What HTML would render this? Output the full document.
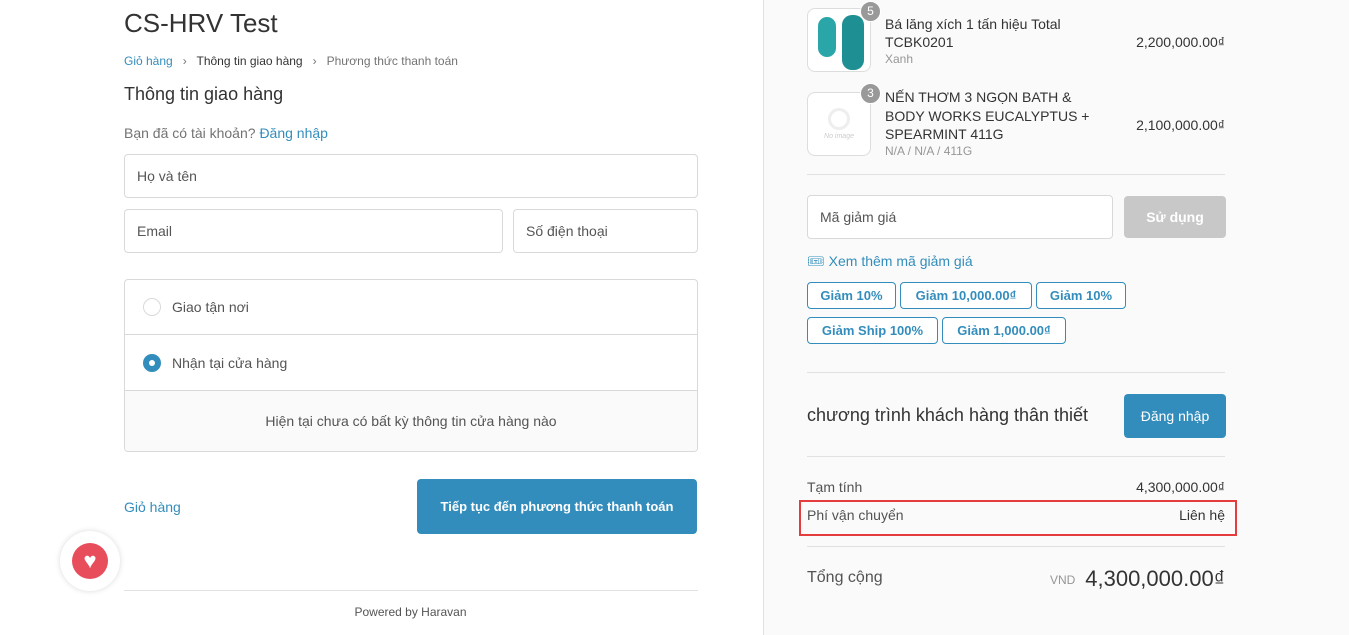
<!DOCTYPE html>
<html><head><meta charset="utf-8"><style>
*{box-sizing:border-box;margin:0;padding:0}
body{width:1349px;height:635px;overflow:hidden;font-family:"Liberation Sans",Arial,sans-serif;color:#333;background:#fff;position:relative}
.abs{position:absolute}
.right{position:absolute;left:763px;top:0;width:586px;height:635px;background:#fafafa;border-left:1px solid #e1e1e1}
.inp{position:absolute;border:1px solid #d9d9d9;border-radius:4px;background:#fff;font-size:14px;color:#555;padding-left:12px;display:flex;align-items:center}
.blue{color:#338dbc}
.tag{position:absolute;height:27px;border:1px solid #338dbc;border-radius:4px;color:#338dbc;font-weight:bold;font-size:13px;display:flex;align-items:center;justify-content:center;background:#fff}
.line{position:absolute;height:1px;background:#e1e1e1}
</style></head><body>
<div class="abs" style="left:124px;top:8px;font-size:26px;color:#333">CS-HRV Test</div>
<div class="abs" style="left:124px;top:54px;font-size:12px;color:#737373"><span class="blue">Giỏ hàng</span> &nbsp;&nbsp;›&nbsp;&nbsp; <span style="color:#333">Thông tin giao hàng</span> &nbsp;&nbsp;›&nbsp;&nbsp; Phương thức thanh toán</div>
<div class="abs" style="left:124px;top:84px;font-size:18px">Thông tin giao hàng</div>
<div class="abs" style="left:124px;top:125px;font-size:14px;color:#737373">Bạn đã có tài khoản? <span class="blue">Đăng nhập</span></div>
<div class="inp" style="left:124px;top:154px;width:574px;height:44px">Họ và tên</div>
<div class="inp" style="left:124px;top:209px;width:379px;height:44px">Email</div>
<div class="inp" style="left:513px;top:209px;width:185px;height:44px">Số điện thoại</div>
<div class="abs" style="left:124px;top:279px;width:574px;height:173px;border:1px solid #d9d9d9;border-radius:4px;overflow:hidden">
 <div style="height:55px;border-bottom:1px solid #d9d9d9;display:flex;align-items:center;padding-left:18px;font-size:14px;color:#545454"><span style="width:18px;height:18px;border:1px solid #d9d9d9;border-radius:50%;margin-right:11px"></span>Giao tận nơi</div>
 <div style="height:56px;border-bottom:1px solid #d9d9d9;display:flex;align-items:center;padding-left:18px;font-size:14px;color:#545454"><span style="width:18px;height:18px;background:#338dbc;border-radius:50%;margin-right:11px;display:flex;align-items:center;justify-content:center"><span style="width:6px;height:6px;background:#fff;border-radius:50%"></span></span>Nhận tại cửa hàng</div>
 <div style="height:60px;background:#fafafa;display:flex;align-items:center;justify-content:center;font-size:14px;color:#545454">Hiện tại chưa có bất kỳ thông tin cửa hàng nào</div>
</div>
<div class="abs blue" style="left:124px;top:499px;font-size:14px">Giỏ hàng</div>
<div class="abs" style="left:417px;top:479px;width:280px;height:55px;background:#338dbc;border-radius:4px;color:#fff;font-size:13px;font-weight:bold;display:flex;align-items:center;justify-content:center">Tiếp tục đến phương thức thanh toán</div>
<div class="line" style="left:124px;top:590px;width:574px"></div>
<div class="abs" style="left:0;width:821px;top:605px;text-align:center;font-size:12px;color:#545454">Powered by Haravan</div>
<div class="abs" style="left:60px;top:531px;width:60px;height:60px;border-radius:50%;background:#fff;box-shadow:0 0 6px rgba(0,0,0,.15)"><div style="position:absolute;left:12px;top:12px;width:36px;height:36px;border-radius:50%;background:#e84d5b;color:#fff;font-size:22px;text-align:center;line-height:36px">♥</div></div>

<div class="right">
 <div class="abs" style="left:43px;top:8px;width:64px;height:64px;border:1px solid #ddd;border-radius:8px;background:#fff;overflow:hidden"><div style="position:absolute;left:10px;top:8px;width:18px;height:40px;background:#2aa6a8;border-radius:9px"></div><div style="position:absolute;left:34px;top:6px;width:22px;height:55px;background:#1e8f92;border-radius:10px"></div></div>
 <div class="abs" style="left:96px;top:1px;width:21px;height:21px;border-radius:50%;background:#999;color:#fff;font-size:12px;text-align:center;line-height:19px;border:1px solid #fff">5</div>
 <div class="abs" style="left:121px;top:15px;font-size:14px;line-height:18px">Bá lăng xích 1 tấn hiệu Total<br>TCBK0201</div>
 <div class="abs" style="left:121px;top:52px;font-size:12px;color:#969696">Xanh</div>
 <div class="abs" style="right:124px;top:34px;font-size:14px">2,200,000.00₫</div>
 <div class="abs" style="left:43px;top:92px;width:64px;height:64px;border:1px solid #ddd;border-radius:8px;background:#fff;text-align:center;font-size:7px;color:#ccc;font-style:italic"><div style="width:22px;height:22px;border:3px solid #eee;border-radius:50%;margin:15px auto 3px"></div>No image</div>
 <div class="abs" style="left:96px;top:83px;width:21px;height:21px;border-radius:50%;background:#999;color:#fff;font-size:12px;text-align:center;line-height:19px;border:1px solid #fff">3</div>
 <div class="abs" style="left:121px;top:88px;font-size:14px;line-height:18.5px">NẾN THƠM 3 NGỌN BATH &amp;<br>BODY WORKS EUCALYPTUS +<br>SPEARMINT 411G</div>
 <div class="abs" style="left:121px;top:144px;font-size:12px;color:#969696">N/A / N/A / 411G</div>
 <div class="abs" style="right:124px;top:117px;font-size:14px">2,100,000.00₫</div>
 <div class="line" style="left:43px;top:174px;width:418px"></div>
 <div class="inp" style="left:43px;top:195px;width:306px;height:44px">Mã giảm giá</div>
 <div class="abs" style="left:360px;top:196px;width:102px;height:42px;background:#c8c8c8;border-radius:4px;color:#fff;font-size:14px;font-weight:bold;display:flex;align-items:center;justify-content:center">Sử dụng</div>
 <div class="abs blue" style="left:43px;top:253px;font-size:14px">🎟 Xem thêm mã giảm giá</div>
 <div class="tag" style="left:43px;top:282px;width:89px">Giảm 10%</div>
 <div class="tag" style="left:136px;top:282px;width:132px">Giảm 10,000.00₫</div>
 <div class="tag" style="left:272px;top:282px;width:90px">Giảm 10%</div>
 <div class="tag" style="left:43px;top:317px;width:131px">Giảm Ship 100%</div>
 <div class="tag" style="left:178px;top:317px;width:124px">Giảm 1,000.00₫</div>
 <div class="line" style="left:43px;top:372px;width:418px"></div>
 <div class="abs" style="left:43px;top:405px;font-size:18px">chương trình khách hàng thân thiết</div>
 <div class="abs" style="left:360px;top:394px;width:102px;height:44px;background:#338dbc;border-radius:4px;color:#fff;font-size:14px;display:flex;align-items:center;justify-content:center">Đăng nhập</div>
 <div class="line" style="left:43px;top:456px;width:418px"></div>
 <div class="abs" style="left:43px;top:479px;font-size:14px;color:#535353">Tạm tính</div>
 <div class="abs" style="right:124px;top:479px;font-size:14px;color:#333">4,300,000.00₫</div>
 <div class="abs" style="left:35px;top:500px;width:438px;height:36px;border:2px solid #e53d3d"></div>
 <div class="abs" style="left:43px;top:507px;font-size:14px;color:#535353">Phí vận chuyển</div>
 <div class="abs" style="right:124px;top:507px;font-size:14px">Liên hệ</div>
 <div class="line" style="left:43px;top:546px;width:418px"></div>
 <div class="abs" style="left:43px;top:569px;font-size:16px;color:#535353">Tổng cộng</div>
 <div class="abs" style="left:286px;top:573px;font-size:12px;color:#969696">VND</div>
 <div class="abs" style="right:124px;top:566px;font-size:22px;color:#333">4,300,000.00₫</div>
</div>
</body></html>
